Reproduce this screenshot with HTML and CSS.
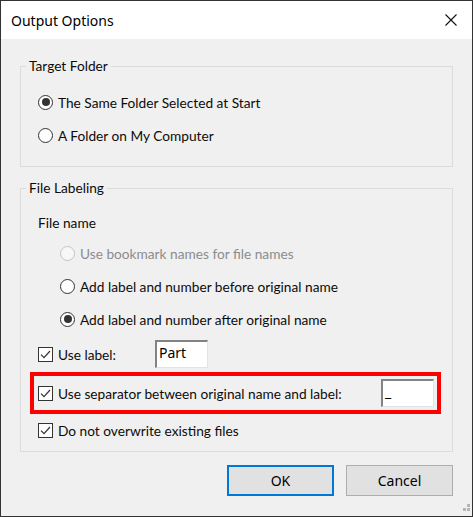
FILE: index.html
```html
<!DOCTYPE html>
<html>
<head>
<meta charset="utf-8">
<link rel="stylesheet" href="styles.css">
</head>
<body>
<div class="window">
  <div class="titlebar">
    <span class="title">Output Options</span>
    <svg class="close" width="12" height="12" viewBox="0 0 12 12"><path d="M0.5 0.5 L11.5 11.5 M11.5 0.5 L0.5 11.5" stroke="#111" stroke-width="1.1" fill="none"/></svg>
  </div>
  <div class="content">
    <fieldset class="group g1">
      <legend>Target Folder</legend>
      <div class="body">
        <div class="row"><span class="radio on"></span><span>The Same Folder Selected at Start</span></div>
        <div class="row"><span class="radio"></span><span>A Folder on My Computer</span></div>
      </div>
    </fieldset>
    <fieldset class="group g2">
      <legend>File Labeling</legend>
      <div class="body">
        <div class="row heading">File name</div>
        <div class="row sub disabled"><span class="radio"></span><span>Use bookmark names for file names</span></div>
        <div class="row sub"><span class="radio"></span><span>Add label and number before original name</span></div>
        <div class="row sub"><span class="radio on"></span><span>Add label and number after original name</span></div>
        <div class="row tall">
          <span class="check-label"><span class="check"><svg width="15" height="15" viewBox="0 0 15 15"><path d="M3 7.6 L6 10.6 L12 4" stroke="#333" stroke-width="1.2" fill="none"/></svg></span><span>Use label:</span></span>
          <span class="textbox">Part</span>
        </div>
        <div class="highlight">
          <span class="check"><svg width="15" height="15" viewBox="0 0 15 15"><path d="M3 7.6 L6 10.6 L12 4" stroke="#333" stroke-width="1.2" fill="none"/></svg></span><span>Use separator between original name and label:</span>
          <span class="textbox sep">_</span>
        </div>
        <div class="row last"><span class="check"><svg width="15" height="15" viewBox="0 0 15 15"><path d="M3 7.6 L6 10.6 L12 4" stroke="#333" stroke-width="1.2" fill="none"/></svg></span><span>Do not overwrite existing files</span></div>
      </div>
    </fieldset>
    <div class="buttons">
      <button class="btn default">OK</button>
      <button class="btn">Cancel</button>
    </div>
  </div>
  <svg class="grip" width="10" height="10" viewBox="0 0 10 10"><rect x="7" y="0" width="3" height="3" fill="#b5b5b5"/><rect x="3" y="4" width="3" height="3" fill="#b5b5b5"/><rect x="7" y="4" width="3" height="3" fill="#b5b5b5"/></svg>
</div>
</body>
</html>
```
FILE: styles.css
```css
* { box-sizing: border-box; }
html, body { margin: 0; padding: 0; background: #f0f0f0; }
.window {
  position: relative;
  width: 473px;
  height: 517px;
  border: 1px solid #333;
  background: #f0f0f0;
  display: flex;
  flex-direction: column;
  font-family: "Lato", "Open Sans", sans-serif;
  font-size: 13.7px;
  color: #0c0c0c;
}
.titlebar {
  height: 38px;
  background: #fff;
  display: flex;
  align-items: center;
  justify-content: space-between;
  padding: 0 15px 0 10px;
  flex: none;
}
.title {
  font-family: "Noto Sans", sans-serif;
  font-size: 14px;
  color: #000;
}
.content {
  flex: 1;
  padding: 17px 19px 0 19px;
  display: flex;
  flex-direction: column;
}
.group {
  margin: 0;
  padding: 0;
  border: 1px solid #dcdcdc;
  min-width: 0;
}
.group legend {
  margin-left: 5px;
  padding: 0 3px;
  line-height: 20px;
  height: 20px;
}
.g1 .body { padding: 16px 0 21px 17px; display: flex; flex-direction: column; gap: 13px; }
.g2 { margin-top: 11px; }
.g2 .body { padding: 14px 0 11px 17px; display: flex; flex-direction: column; }
.row {
  height: 20px;
  display: flex;
  align-items: center;
  gap: 5px;
}
.sub { margin-left: 22px; margin-top: 13px; }
.sub:nth-child(2) { margin-top: 11px; }
.disabled { color: #8c8c8c; }
.radio {
  width: 15px;
  height: 15px;
  border-radius: 50%;
  border: 1px solid #333;
  background: #fff;
  flex: none;
  display: flex;
  align-items: center;
  justify-content: center;
}
.radio.on::after {
  content: "";
  width: 8px;
  height: 8px;
  border-radius: 50%;
  background: #333;
}
.disabled .radio { border-color: #c4c4c4; background: #f7f7f7; }
.check {
  width: 15px;
  height: 15px;
  border: 1px solid #333;
  background: #fff;
  flex: none;
  display: flex;
}
.check svg { margin: -1px; }
.tall { height: 28px; margin-top: 11px; gap: 0; }
.check-label { width: 117px; display: flex; align-items: center; gap: 5px; }
.textbox {
  width: 53px;
  height: 28px;
  background: #fff;
  border-style: solid;
  border-width: 2px 1px 1px 2px;
  border-color: #838383 #e3e3e3 #e3e3e3 #838383;
  font-family: "Noto Sans", sans-serif;
  font-size: 14px;
  color: #000;
  padding: 1px 0 0 2px;
  line-height: 20px;
}
.highlight {
  margin: 4px 11px 0 -8px;
  border: 4px solid #f00;
  height: 42px;
  display: flex;
  align-items: center;
  gap: 5px;
  padding: 0 3px 0 4px;
}
.highlight .sep { margin-left: auto; }
.last { margin-top: 6px; }
.buttons {
  display: flex;
  justify-content: flex-end;
  gap: 12px;
  margin-top: 13px;
}
.btn {
  width: 107px;
  height: 31px;
  background: #e1e1e1;
  border: 1px solid #adadad;
  font-family: "Noto Sans", sans-serif;
  font-size: 14px;
  color: #000;
  padding: 0;
}
.btn.default { border: 2px solid #0078d7; }
.grip { position: absolute; right: 2px; bottom: 2px; }
```
